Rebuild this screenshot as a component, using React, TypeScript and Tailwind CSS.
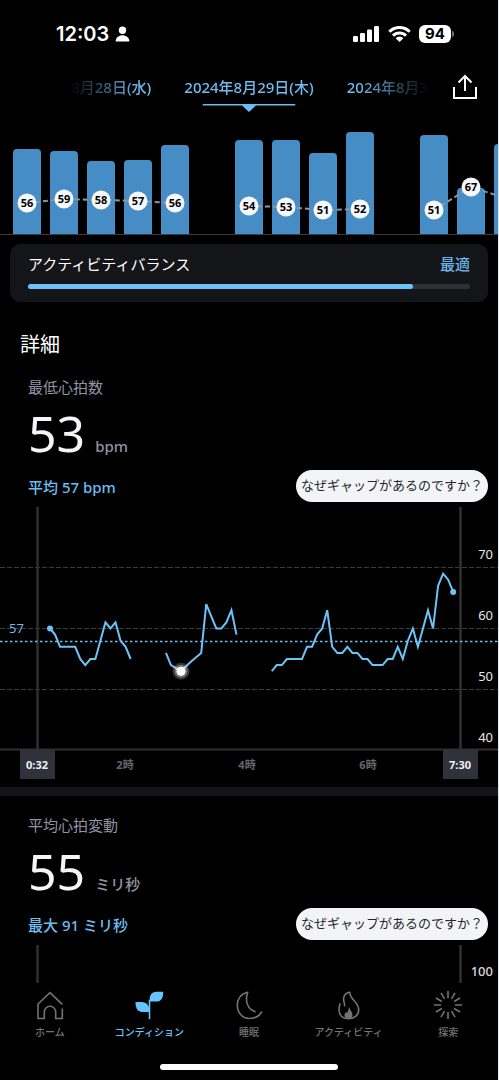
import { useState } from "react";

type Night = { x: number; height: number; bpm?: number; dotY?: number };

const nights: Night[] = [
  { x: 13, height: 85, bpm: 56, dotY: 91 },
  { x: 50, height: 83, bpm: 59, dotY: 87 },
  { x: 87, height: 73, bpm: 58, dotY: 88 },
  { x: 124, height: 74, bpm: 57, dotY: 89 },
  { x: 161, height: 89, bpm: 56, dotY: 91 },
  { x: 235, height: 94, bpm: 54, dotY: 94 },
  { x: 272, height: 94, bpm: 53, dotY: 95 },
  { x: 309, height: 81, bpm: 51, dotY: 98 },
  { x: 346, height: 102, bpm: 52, dotY: 97 },
  { x: 420, height: 99, bpm: 51, dotY: 98 },
  { x: 457, height: 46, bpm: 67, dotY: 75 },
  { x: 494, height: 90 },
];

// Dashed connectors are broken where a night is missing
const trends = [
  "27,91 64,87 101,88 138,89 175,91",
  "249,94 286,95 323,98 360,97",
  "434,98 471,75 508,87",
];

// Heart rate samples every five minutes, split where there is no reading
const samples = [
  {
    start: 0,
    bpm: [60, 59, 57, 57, 57, 57, 55, 54, 55, 55, 58, 61, 60, 61, 58, 57, 55],
  },
  {
    start: 23,
    bpm: [56, 54, 53.5, 53, 53.8, 54.6, 55.3, 56, 64, 62, 60, 60, 61, 63, 59],
  },
  {
    start: 44,
    bpm: [
      53, 54, 54, 55, 55, 55, 55, 57, 57, 59, 60, 63, 57, 56, 56, 57, 56, 56,
      55, 55, 54, 54, 54, 55, 55, 57, 55, 58, 60, 57, 60, 63, 60, 67, 69, 68,
      66,
    ],
  },
];

const sampleX = (index: number) => 50 + index * 5.04;
const sampleY = (bpm: number) => 126.5 + (60 - bpm) * 6.1;

const dates = ["2024年8月28日(水)", "2024年8月29日(木)", "2024年8月30日(金)"];

const StatusBar = () => (
  <div className="flex h-[66px] items-center justify-between pt-0.5 pr-11 pl-14">
    <div className="flex items-center gap-1.5 font-[Inter,sans-serif] text-xl font-semibold">
      12:03
      <svg className="h-4 w-[15px]" viewBox="0 0 15 16" fill="currentColor">
        <circle cx="7.5" cy="4.3" r="3.7" />
        <path d="M1.5 15.4C.8 15.4.6 15 .7 14.4 1.2 11.6 4 9.3 7.5 9.3s6.3 2.3 6.8 5.1c.1.6-.1 1-.8 1z" />
      </svg>
    </div>
    <div className="flex items-center gap-2">
      <svg className="h-4 w-[27px]" viewBox="0 0 27 16" fill="currentColor">
        <rect x="0" y="10" width="5" height="6" rx="1.3" />
        <rect x="7" y="7" width="5" height="9" rx="1.3" />
        <rect x="14" y="3.5" width="5" height="12.5" rx="1.3" />
        <rect x="21" y="0" width="5" height="16" rx="1.3" />
      </svg>
      <svg className="h-4 w-[23px]" viewBox="0 0 23 16" fill="none">
        <g stroke="currentColor" strokeWidth="3">
          <path d="M1.3 5.7a14.4 14.4 0 0 1 20.4 0" />
          <path d="M5 9.6a9.2 9.2 0 0 1 13 0" />
        </g>
        <path d="M11.5 16 7.6 12.2a5.6 5.6 0 0 1 7.8 0z" fill="currentColor" />
      </svg>
      <div className="flex items-center gap-px">
        <span className="flex h-[18px] w-8 items-center justify-center rounded-md bg-white font-[Inter,sans-serif] text-[15px] font-bold text-black">
          94
        </span>
        <span className="h-1.5 w-0.5 rounded-r-full bg-gray-500" />
      </div>
    </div>
  </div>
);

const DatePicker = () => {
  const [selected, setSelected] = useState(1);
  return (
    <div className="relative flex h-[46px] px-[69px]">
      <div className="flex h-[42px] flex-1 items-center justify-center gap-[33px] overflow-hidden mask-[linear-gradient(to_right,transparent,black_20%,black_80%,transparent)]">
        {dates.map((date, index) => (
          <button
            key={date}
            className="shrink-0 text-[15px] font-medium whitespace-nowrap text-[#6fbdf0]"
            aria-pressed={selected === index}
            onClick={() => setSelected(index)}
          >
            {date}
          </button>
        ))}
      </div>
      <svg
        className="absolute bottom-0 left-1/2 h-2 w-[93px] -translate-x-1/2"
        viewBox="0 0 93 8"
        fill="#6bbcf0"
      >
        <path d="M0 0h93v1.5H0zM39 1h15l-7.5 7z" />
      </svg>
      <button aria-label="共有" className="absolute top-2 right-5">
        <svg
          className="h-[26px] w-[26px]"
          viewBox="0 0 26 26"
          fill="none"
          stroke="white"
          strokeWidth="2"
        >
          <path d="M2 13v11h22V13M13 17V2M6.5 8.5 13 2l6.5 6.5" />
        </svg>
      </button>
    </div>
  );
};

const NightBars = () => (
  <svg className="block h-auto w-full" viewBox="0 0 498 124">
    {nights.map(({ x, height }) => (
      <path
        key={x}
        fill="#458dc4"
        d={`M${x} 122V${126 - height}q0-4 4-4h20q4 0 4 4V122z`}
      />
    ))}
    <path d="M0 122.5H498" stroke="#3a3b3e" />
    {trends.map((points) => (
      <polyline
        key={points}
        points={points}
        fill="none"
        stroke="#8f979e"
        strokeWidth="2"
        strokeDasharray="5 3"
      />
    ))}
    {nights.map(
      ({ x, bpm, dotY }) =>
        dotY && (
          <g key={x}>
            <circle cx={x + 14} cy={dotY} r="9.5" fill="#f6f8fc" />
            <text
              x={x + 14}
              y={dotY + 4}
              textAnchor="middle"
              className="fill-black text-[11px] font-bold"
            >
              {bpm}
            </text>
          </g>
        )
    )}
  </svg>
);

const HeartRateChart = () => (
  <svg className="block h-auto w-full" viewBox="0 0 498 285">
    <path
      d="M0 65.5H498M0 126.5H498M0 187.5H498"
      stroke="#3a3a3c"
      strokeDasharray="5 2"
    />
    <path d="M0 247.5H498" stroke="#303033" strokeWidth="2" />
    <path d="M37.5 5V248M460.5 5V248" stroke="#303032" strokeWidth="2.5" />
    <path
      d="M0 139.5H498"
      stroke="#6cbdf0"
      strokeWidth="1.3"
      strokeDasharray="2.5 2.5"
    />
    {samples.map(({ start, bpm }) => (
      <polyline
        key={start}
        points={bpm
          .map((value, i) => `${sampleX(start + i)},${sampleY(value)}`)
          .join(" ")}
        fill="none"
        stroke="#6cc3f8"
        strokeWidth="2"
      />
    ))}
    <circle cx={sampleX(0)} cy={sampleY(60)} r="3" fill="#6cc3f8" />
    <circle cx={sampleX(80)} cy={sampleY(66)} r="3" fill="#6cc3f8" />
    <circle cx={sampleX(26)} cy={sampleY(53)} r="8.5" fill="#ffffff33" />
    <circle cx={sampleX(26)} cy={sampleY(53)} r="6.5" fill="#ffffff55" />
    <circle cx={sampleX(26)} cy={sampleY(53)} r="4.5" fill="white" />
    <g className="fill-[#e4e6ea] text-[13px]" textAnchor="end">
      <text x="493" y="57">70</text>
      <text x="493" y="118">60</text>
      <text x="493" y="179">50</text>
      <text x="493" y="240">40</text>
    </g>
    <text x="9" y="131" className="fill-[#6cb9ec] text-[13px]">
      57
    </text>
    <path d="M20 248h35v29H20zM443 248h35v29H443z" fill="#2f323a" />
    <g className="text-[11px] font-bold" textAnchor="middle">
      <text x="37" y="267" className="fill-[#eef0f4]">0:32</text>
      <text x="460" y="267" className="fill-[#eef0f4]">7:30</text>
      <g className="fill-[#64656c]">
        <text x="125" y="267">2時</text>
        <text x="247" y="267">4時</text>
        <text x="368" y="267">6時</text>
      </g>
    </g>
  </svg>
);

const VariabilityChart = () => (
  <svg className="block h-auto w-full" viewBox="0 0 498 43">
    <path d="M37.5 5V43M460.5 5V43" stroke="#303032" strokeWidth="2.5" />
    <text
      x="493"
      y="36"
      textAnchor="end"
      className="fill-[#d8dade] text-[13px] font-medium"
    >
      100
    </text>
  </svg>
);

interface MetricProps {
  title: string;
  value: number;
  unit: string;
  summary: string;
  children: React.ReactNode;
}

const Metric: React.FC<MetricProps> = ({
  title,
  value,
  unit,
  summary,
  children,
}) => (
  <section className="pt-[17px]">
    <div className="pr-2.5 pl-7">
      <h3 className="text-[15px] leading-6 text-[#9194a4]">{title}</h3>
      <p className="mt-1.5 flex h-14 items-baseline gap-2.5 text-[50px] leading-14 text-[#f4f5f7]">
        {value}
        <span className="text-[15px] font-medium text-[#9194a4]">{unit}</span>
      </p>
      <div className="mt-[9px] flex items-center justify-between">
        <p className="pt-0.5 text-[15px] font-medium text-[#6cbdf0]">
          {summary}
        </p>
        <button className="h-8 rounded-full bg-[#f3f4f7] px-[5px] text-[13px] whitespace-nowrap text-[#25272b]">
          なぜギャップがあるのですか？
        </button>
      </div>
    </div>
    {children}
  </section>
);

const tabs = [
  {
    label: "ホーム",
    icon: (
      <path d="M27.3 14.3 15 2.7 3 14v14.5h6.3V22a5.7 5.7 0 0 1 11.4 0v6.5h6.6v-10" />
    ),
  },
  {
    label: "コンディション",
    icon: (
      <>
        <path d="M15.5 29V10" />
        <path
          d="M15.5 11.6C15.5 5.5 17.5 1.8 22.5 1.8h6.7C29.2 8 27.5 11.6 22.5 11.6zM15.5 22C15.5 15.7 13 12 7.5 12h-6C1.5 18 3.5 22 8.5 22z"
          fill="currentColor"
          stroke="none"
        />
      </>
    ),
  },
  {
    label: "睡眠",
    icon: (
      <path
        d="M21.7 21.7C14 20 10.5 11.5 13.7 2.3 7 3.5 3.3 9 3.3 15.2c0 7.5 5.3 13.3 12 13.3 5.7 0 10.2-2.5 12.7-7"
        strokeLinejoin="round"
      />
    ),
  },
  {
    label: "アクティビティ",
    icon: (
      <>
        <path
          d="M16 2c-3.5.8-6.5 3.500-6.500 7.300 0 2.500 1.500 4 1 7M16 2c-1.500 6.500 8.700 9.500 8.700 17.800 0 5.200-4 8.900-10 8.900s-9.700-3.500-9.700-8.700c0-2.500.3-4.800 1.300-6.700"
          strokeLinejoin="round"
        />
        <path
          d="M14.8 16.5c.7 3 3.7 5 3.7 9 0 1.8-1.5 3.2-3.7 3.2s-4.3-1.2-4.3-3.2c0-1.8.8-2.7 1.8-3.5l.7 1c1-1.8 1.8-3.5 1.8-6.5z"
          fill="currentColor"
          stroke="none"
        />
      </>
    ),
  },
  {
    label: "探索",
    icon: (
      <path d="M15 1v7M15 22v7M1 15h7M22 15h7M8 2.9l3.5 6M18.5 21.1l3.5 6M2.9 8l6 3.5M21.1 18.5l6 3.5M2.9 22l6-3.5M21.1 11.5l6-3.5M8 27.1l3.5-6M18.5 8.9l3.5-6" />
    ),
  },
];

const TabBar = () => {
  const [active, setActive] = useState("コンディション");
  return (
    <nav className="mt-auto pt-[7px] pb-2.5">
      <div className="grid grid-cols-5">
        {tabs.map(({ label, icon }) => (
          <button
            key={label}
            className={`flex flex-col items-center gap-1 ${
              active === label ? "text-[#66c4ff]" : "text-[#737373]"
            }`}
            onClick={() => setActive(label)}
          >
            <svg
              className="h-[30px] w-[30px]"
              viewBox="0 0 30 30"
              fill="none"
              stroke="currentColor"
              strokeWidth="1.6"
            >
              {icon}
            </svg>
            <span className="text-[10px] leading-4 font-medium whitespace-nowrap">
              {label}
            </span>
          </button>
        ))}
      </div>
      <div className="mx-auto mt-6 h-1.5 w-[178px] rounded-full bg-white" />
    </nav>
  );
};

const App = () => (
  <div className="flex min-h-screen flex-col overflow-hidden border-r border-gray-200 bg-black font-['Noto_Sans','Noto_Sans_CJK_JP',sans-serif] text-white">
    <StatusBar />
    <DatePicker />
    <NightBars />
    <div className="mx-2.5 mt-2 rounded-[10px] bg-[#141519] px-[18px] pt-2 pb-[13px]">
      <div className="flex justify-between text-[15px] leading-6">
        <h2>アクティビティバランス</h2>
        <span className="font-medium text-[#68b5e6]">最適</span>
      </div>
      <div className="mt-2 h-[5px] rounded-full bg-[#303138]">
        <div className="h-full w-[87%] rounded-full bg-[#6cc3f8]" />
      </div>
    </div>
    <h2 className="mt-[30px] px-5 text-xl leading-[26px]">詳細</h2>
    <Metric title="最低心拍数" value={53} unit="bpm" summary="平均 57 bpm">
      <HeartRateChart />
    </Metric>
    <div className="h-[9px] bg-[#141519]" />
    <Metric
      title="平均心拍変動"
      value={55}
      unit="ミリ秒"
      summary="最大 91 ミリ秒"
    >
      <VariabilityChart />
    </Metric>
    <TabBar />
  </div>
);

export default App;
